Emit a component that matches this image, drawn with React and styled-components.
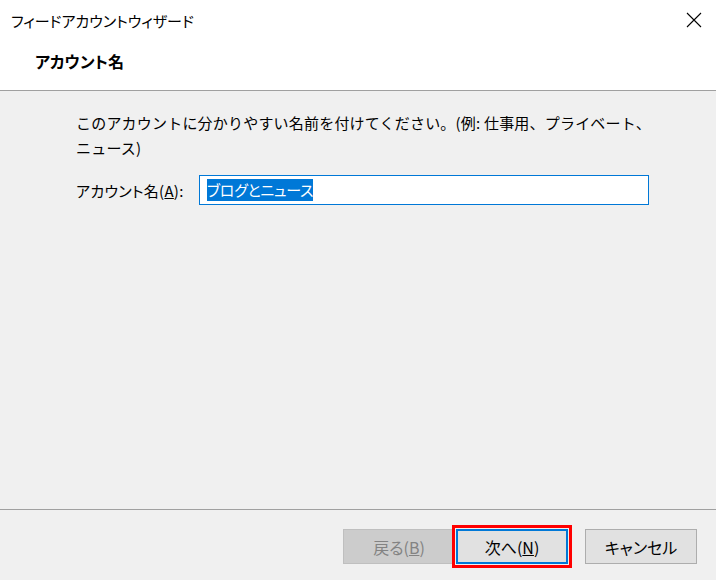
import React from 'react';
import styled, { createGlobalStyle } from 'styled-components';

const GlobalStyle = createGlobalStyle`
  html, body {
    margin: 0;
    padding: 0;
    background: #f0f0f0;
  }
  body {
    font-family: "Noto Sans CJK JP", "Noto Sans", sans-serif;
    font-feature-settings: "palt";
    color: #000;
  }
`;

const Window = styled.div`
  display: flex;
  flex-direction: column;
  width: 716px;
  height: 580px;
  background: #f0f0f0;
  overflow: hidden;
`;

const Header = styled.div`
  display: flex;
  flex-direction: column;
  height: 90px;
  background: #fff;
  border-bottom: 1px solid #a0a0a0;
`;

const TitleBar = styled.div`
  display: flex;
  align-items: center;
  justify-content: space-between;
  height: 40px;
  padding: 0 12px 0 11px;
  font-size: 15px;
`;

const CloseButton = styled.div`
  display: flex;
  align-items: center;
  justify-content: center;
  width: 20px;
  height: 20px;
`;

const PageTitle = styled.div`
  padding: 9px 0 0 35px;
  font-size: 16px;
  font-weight: bold;
`;

const Body = styled.div`
  flex: 1;
  display: flex;
  flex-direction: column;
  padding: 19px 40px 0 76px;
`;

const Description = styled.p`
  margin: 0;
  font-size: 15px;
  line-height: 25px;
  font-feature-settings: normal;
  letter-spacing: 0.2px;
`;

const FieldRow = styled.div`
  display: flex;
  align-items: center;
  margin-top: 15px;
`;

const Label = styled.label`
  width: 123px;
  font-size: 15px;
  letter-spacing: 0.3px;
`;

const TextBox = styled.div`
  display: flex;
  align-items: center;
  width: 450px;
  height: 30px;
  padding: 0 7px;
  box-sizing: border-box;
  background: #fff;
  border: 1px solid #0078d7;
  font-size: 15px;
`;

const Selected = styled.span`
  display: inline-block;
  height: 22px;
  line-height: 22px;
  background: #0078d7;
  color: #fff;
  letter-spacing: -0.3px;
`;

const Footer = styled.div`
  display: flex;
  align-items: flex-start;
  justify-content: flex-end;
  height: 71px;
  padding: 19px 19px 0 0;
  box-sizing: border-box;
  border-top: 1px solid #a0a0a0;
`;

const Button = styled.div`
  display: flex;
  align-items: center;
  justify-content: center;
  width: 112px;
  height: 35px;
  box-sizing: border-box;
  margin-left: ${p => p.gap || 0}px;
  font-size: 16px;
  background: ${p => (p.disabled ? '#cccccc' : '#e1e1e1')};
  color: ${p => (p.disabled ? '#838383' : '#000')};
  border: ${p => (p.primary ? '2px solid #0078d7' : p.disabled ? '1px solid #bfbfbf' : '1px solid #adadad')};
  outline: ${p => (p.marked ? '3px solid #ff0000' : 'none')};
  outline-offset: 1px;
`;

export default function App() {
  return (
    <Window>
      <GlobalStyle />
      <Header>
        <TitleBar>
          <span>フィードアカウントウィザード</span>
          <CloseButton>
            <svg width="16" height="16" viewBox="0 0 16 16">
              <path d="M1 1 L15 15 M15 1 L1 15" stroke="#000" strokeWidth="1.1" />
            </svg>
          </CloseButton>
        </TitleBar>
        <PageTitle>アカウント名</PageTitle>
      </Header>
      <Body>
        <Description>
          このアカウントに分かりやすい名前を付けてください。(例: 仕事用、プライベート、
          <br />
          ニュース)
        </Description>
        <FieldRow>
          <Label>
            アカウント名(<u>A</u>):
          </Label>
          <TextBox>
            <Selected>ブログとニュース</Selected>
          </TextBox>
        </FieldRow>
      </Body>
      <Footer>
        <Button disabled>
          戻る(<u>B</u>)
        </Button>
        <Button primary marked gap={1}>
          次へ(<u>N</u>)
        </Button>
        <Button gap={17}>キャンセル</Button>
      </Footer>
    </Window>
  );
}
